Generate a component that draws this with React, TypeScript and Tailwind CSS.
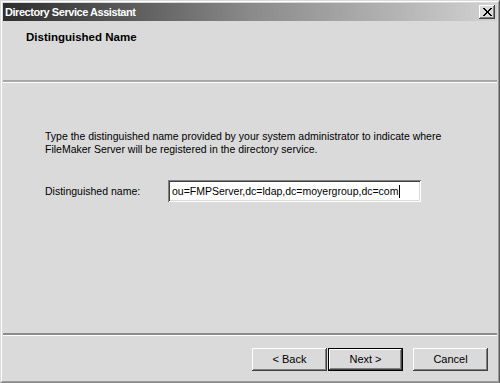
import React from "react";

const btnBase =
  "h-[23px] w-[75px] flex items-center justify-center bg-[#dadada] text-[11px] text-black";

export default function App() {
  return (
    <div className="w-[500px] h-[383px] bg-[#dadada] border-t border-l border-[#dadada] border-r border-b border-r-[#5a5a5a] border-b-[#8a8a8a] font-['Liberation_Sans',Arial,sans-serif] text-[10.5px] text-black overflow-hidden">
      <div className="h-full border-t border-l border-white border-r border-b border-r-[#9a9a9a] border-b-[#9a9a9a] p-px flex flex-col">
        {/* Title bar */}
        <div className="h-[18px] flex items-center justify-between bg-gradient-to-r from-[#2e2e2e] via-[#8a8a8a] to-[#d2d2d2] pl-[2px] pr-[2px] shrink-0">
          <span className="text-white font-bold text-[11px] leading-[18px] tracking-[-0.45px]">
            Directory Service Assistant
          </span>
          <div className="w-[16px] h-[14px] bg-[#dadada] shadow-[inset_-1px_-1px_#404040,inset_1px_1px_#ffffff,inset_-2px_-2px_#808080] flex items-center justify-center">
            <svg width="9" height="8" viewBox="0 0 9 8" shapeRendering="crispEdges">
              <path d="M0 0L8 8M1 0L9 8M8 0L0 8M9 0L1 8" stroke="#000" strokeWidth="1.2" />
            </svg>
          </div>
        </div>

        {/* Header */}
        <div className="h-[59px] pt-[10px] pl-[23px] shrink-0">
          <div className="font-bold text-[11.5px] leading-[13px]">Distinguished Name</div>
        </div>
        <div className="h-[2px] bg-[#a8a8a8] shrink-0" />
        <div className="h-px bg-white shrink-0" />

        {/* Body */}
        <div className="flex-1 pt-[47px] pl-[42px]">
          <p className="leading-[13px]">
            Type the distinguished name provided by your system administrator to indicate where
            <br />
            FileMaker Server will be registered in the directory service.
          </p>
          <div className="flex items-center mt-[24px]">
            <span className="w-[123px] leading-[13px]">Distinguished name:</span>
            <div className="w-[253px] h-[22px] bg-white shadow-[inset_1px_1px_#808080,inset_-1px_-1px_#ffffff,inset_2px_2px_#404040,inset_-2px_-2px_#dadada] flex items-center pl-[4px]">
              <span className="leading-[13px]">ou=FMPServer,dc=ldap,dc=moyergroup,dc=com</span>
              <span className="w-px h-[13px] bg-black ml-px" />
            </div>
          </div>
        </div>

        {/* Bottom separator */}
        <div className="h-[2px] bg-[#8c8c8c] shrink-0" />
        <div className="h-px bg-white shrink-0" />

        {/* Footer */}
        <div className="h-[44px] shrink-0 flex items-start justify-end pt-[12px] pr-[9px]">
          <div className={`${btnBase} shadow-[inset_-1px_-1px_#404040,inset_1px_1px_#ffffff,inset_-2px_-2px_#808080]`}>
            &lt; Back
          </div>
          <div className={`${btnBase} ml-px border border-black shadow-[inset_-1px_-1px_#404040,inset_1px_1px_#ffffff,inset_-2px_-2px_#808080]`}>
            Next &gt;
          </div>
          <div className={`${btnBase} ml-[10px] shadow-[inset_-1px_-1px_#404040,inset_1px_1px_#ffffff,inset_-2px_-2px_#808080]`}>
            Cancel
          </div>
        </div>
      </div>
    </div>
  );
}
